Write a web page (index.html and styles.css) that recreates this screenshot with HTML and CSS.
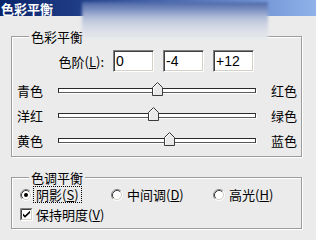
FILE: index.html
```html
<!DOCTYPE html>
<html lang="zh-CN">
<head>
<meta charset="utf-8">
<title>色彩平衡</title>
<link rel="stylesheet" href="styles.css">
</head>
<body>
<div class="titlebar">色彩平衡</div>

<section class="group group-balance">
  <div class="group-title">色彩平衡</div>
  <div class="levels">
    <label class="levels-label">色阶(<u>L</u>):</label>
    <input class="num" value="0">
    <input class="num" value="-4">
    <input class="num" value="+12">
  </div>

  <div class="slider first">
    <span class="lbl">青色</span>
    <div class="track">
      <span class="thumb" style="left:50%"><svg width="11" height="14" viewBox="0 0 11 14"><path d="M0.5 13.5V5.5L5.5 0.5L10.5 5.5V13.5Z" fill="#e9e9e9" stroke="#3a3a3a"/><path d="M1.5 12.5V5.9L5.5 1.9" fill="none" stroke="#fff"/></svg></span>
    </div>
    <span class="lbl lbl-right">红色</span>
  </div>

  <div class="slider">
    <span class="lbl">洋红</span>
    <div class="track">
      <span class="thumb" style="left:48%"><svg width="11" height="14" viewBox="0 0 11 14"><path d="M0.5 13.5V5.5L5.5 0.5L10.5 5.5V13.5Z" fill="#e9e9e9" stroke="#3a3a3a"/><path d="M1.5 12.5V5.9L5.5 1.9" fill="none" stroke="#fff"/></svg></span>
    </div>
    <span class="lbl lbl-right">绿色</span>
  </div>

  <div class="slider">
    <span class="lbl">黄色</span>
    <div class="track">
      <span class="thumb" style="left:56%"><svg width="11" height="14" viewBox="0 0 11 14"><path d="M0.5 13.5V5.5L5.5 0.5L10.5 5.5V13.5Z" fill="#e9e9e9" stroke="#3a3a3a"/><path d="M1.5 12.5V5.9L5.5 1.9" fill="none" stroke="#fff"/></svg></span>
    </div>
    <span class="lbl lbl-right">蓝色</span>
  </div>
</section>

<section class="group group-tone">
  <div class="group-title">色调平衡</div>
  <div class="radios">
    <label class="opt">
      <svg class="radio" width="12" height="12" viewBox="0 0 12 12"><circle cx="6" cy="6" r="4.5" fill="#fff"/><path d="M2.11 9.89A5.5 5.5 0 0 1 9.89 2.11" fill="none" stroke="#808080"/><path d="M2.82 9.18A4.5 4.5 0 0 1 9.18 2.82" fill="none" stroke="#404040"/><path d="M9.89 2.11A5.5 5.5 0 0 1 2.11 9.89" fill="none" stroke="#fff"/><path d="M9.18 2.82A4.5 4.5 0 0 1 2.82 9.18" fill="none" stroke="#d4d0c8"/><circle cx="6" cy="6" r="2" fill="#000"/></svg>
      <span class="txt focus">阴影(<u>S</u>)</span>
    </label>
    <label class="opt">
      <svg class="radio" width="12" height="12" viewBox="0 0 12 12"><circle cx="6" cy="6" r="4.5" fill="#fff"/><path d="M2.11 9.89A5.5 5.5 0 0 1 9.89 2.11" fill="none" stroke="#808080"/><path d="M2.82 9.18A4.5 4.5 0 0 1 9.18 2.82" fill="none" stroke="#404040"/><path d="M9.89 2.11A5.5 5.5 0 0 1 2.11 9.89" fill="none" stroke="#fff"/><path d="M9.18 2.82A4.5 4.5 0 0 1 2.82 9.18" fill="none" stroke="#d4d0c8"/></svg>
      <span class="txt">中间调(<u>D</u>)</span>
    </label>
    <label class="opt">
      <svg class="radio" width="12" height="12" viewBox="0 0 12 12"><circle cx="6" cy="6" r="4.5" fill="#fff"/><path d="M2.11 9.89A5.5 5.5 0 0 1 9.89 2.11" fill="none" stroke="#808080"/><path d="M2.82 9.18A4.5 4.5 0 0 1 9.18 2.82" fill="none" stroke="#404040"/><path d="M9.89 2.11A5.5 5.5 0 0 1 2.11 9.89" fill="none" stroke="#fff"/><path d="M9.18 2.82A4.5 4.5 0 0 1 2.82 9.18" fill="none" stroke="#d4d0c8"/></svg>
      <span class="txt">高光(<u>H</u>)</span>
    </label>
  </div>
  <label class="check-row">
    <svg class="checkbox" width="13" height="13" viewBox="0 0 13 13"><rect x="0" y="0" width="13" height="13" fill="#fff"/><path d="M0.5 12.5V0.5H12.5" fill="none" stroke="#808080"/><path d="M1.5 11.5V1.5H11.5" fill="none" stroke="#404040"/><path d="M0.5 12.5H12.5V0.5" fill="none" stroke="#fff"/><path d="M1.5 11.5H11.5V1.5" fill="none" stroke="#d4d0c8"/><path d="M3 5.5L5 7.5L10 2.8V5L5 9.8L3 7.8Z" fill="#000"/></svg>
    <span class="txt">保持明度(<u>V</u>)</span>
  </label>
</section>

<div class="smudge"></div>
</body>
</html>
```

FILE: styles.css
```css
* {
  box-sizing: border-box;
}

html,
body {
  margin: 0;
  padding: 0;
}

body {
  position: relative;
  width: 316px;
  height: 240px;
  overflow: hidden;
  background: #ebebeb;
  color: #000;
  font: 13px/15px "Noto Sans CJK SC", "Noto Sans", sans-serif;
}

u {
  text-decoration: underline;
  text-underline-offset: 1px;
}

.titlebar {
  height: 16px;
  padding: 1px 0 0 1px;
  line-height: 15px;
  color: #fff;
  font-weight: bold;
  background: linear-gradient(to right, #0a246a 0%, #1f3d86 25%, #6a8cce 75%, #8fb2ea 100%);
}

.smudge {
  position: absolute;
  left: 82px;
  top: 2px;
  width: 186px;
  height: 37px;
  z-index: 2;
  pointer-events: none;
  background: linear-gradient(to bottom,
    #4d67a8 0%,
    #7e92c2 22%,
    #b2bdd8 42%,
    #ccd2e1 60%,
    #dde0e8 80%,
    #e7e8ec 100%);
  filter: blur(1.5px);
}

.group {
  width: 291px;
  margin: 20px 0 0 11px;
  border: 1px solid #9c9c9c;
  box-shadow: 1px 1px 0 #fff, inset 1px 1px 0 #fff;
}

.group-title {
  display: table;
  margin: -8px 0 0 12px;
  padding: 0 2px;
  line-height: 15px;
  background: #ebebeb;
}

.group-balance {
  padding: 0 5px 3px;
}

.group-tone {
  padding: 0 5px 5px;
}

.levels {
  display: flex;
  align-items: center;
  height: 22px;
  margin-top: 6px;
}

.levels-label {
  width: 87px;
  margin-right: 9px;
  text-align: right;
}

.num {
  width: 41px;
  height: 22px;
  margin: 0 9px 0 0;
  padding: 0 0 0 2px;
  border: 1px solid;
  border-color: #808080 #fff #fff #808080;
  box-shadow: inset 1px 1px 0 #404040, inset -1px -1px 0 #d4d0c8;
  background: #fff;
  color: #000;
  font: 14px "Liberation Sans", Arial, sans-serif;
  outline: none;
}

.slider {
  display: grid;
  grid-template-columns: 41px 198px 1fr;
  align-items: center;
  height: 25px;
}

.slider.first {
  margin-top: 6px;
}

.lbl {
  white-space: nowrap;
}

.lbl-right {
  padding-left: 15px;
}

.track {
  position: relative;
  height: 5px;
  border: 1px solid;
  border-color: #2a2a2a #3a3a3a #5a5a5a #2a2a2a;
  background: #fff;
  box-shadow: 1px 1px 0 #fff;
}

.thumb {
  position: absolute;
  top: -7px;
  display: block;
  width: 11px;
  height: 14px;
  margin-left: -5px;
}

.thumb svg {
  display: block;
}

.radios {
  display: grid;
  grid-template-columns: 91px 102px auto;
  align-items: center;
  height: 17px;
  margin-top: 1px;
  padding-left: 3px;
}

.opt,
.check-row {
  display: flex;
  align-items: center;
  white-space: nowrap;
}

.opt svg,
.check-row svg {
  flex: none;
  display: block;
}

.opt .txt {
  margin-left: 2px;
  padding: 0 2px;
}

.focus {
  outline: 1px dotted #000;
}

.check-row {
  height: 17px;
  margin-top: 3px;
  padding-left: 3px;
}

.check-row .txt {
  margin-left: 3px;
}
```
